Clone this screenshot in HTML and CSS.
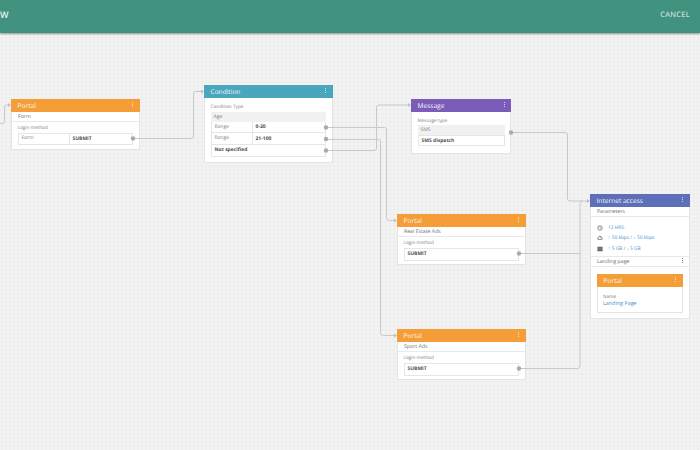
FILE: index.html
```html
<!DOCTYPE html>
<html lang="en">
<head>
<meta charset="utf-8">
<title>Flow editor</title>
<link rel="stylesheet" href="styles.css">
</head>
<body>
<header class="topbar">
  <span class="topbar-title">W</span>
  <span class="topbar-action">CANCEL</span>
</header>
<main class="canvas">
  <section class="node node-portal-form">
    <div class="node-head orange"><span>Portal</span><i class="kebab"></i></div>
    <div class="node-sub">Form</div>
    <div class="node-body">
      <div class="label">Login method</div>
      <div class="rows">
        <div class="row row-form"><span class="cell-key wide">Form</span><b>SUBMIT</b></div>
      </div>
    </div>
  </section>

  <section class="node node-condition">
    <div class="node-head teal"><span>Condition</span><i class="kebab"></i></div>
    <div class="node-body">
      <div class="label">Condition Type</div>
      <div class="grey-row">Age</div>
      <div class="rows">
        <div class="row"><span class="cell-key">Range</span><b>0-20</b></div>
        <div class="row"><span class="cell-key">Range</span><b>21-100</b></div>
        <div class="row"><b class="solo">Not specified</b></div>
      </div>
    </div>
  </section>

  <section class="node node-message">
    <div class="node-head purple"><span>Message</span><i class="kebab"></i></div>
    <div class="node-body">
      <div class="label">Message type</div>
      <div class="grey-row">SMS</div>
      <div class="rows">
        <div class="row row-message"><b class="solo">SMS dispatch</b></div>
      </div>
    </div>
  </section>

  <section class="node node-portal-real">
    <div class="node-head orange"><span>Portal</span><i class="kebab"></i></div>
    <div class="node-sub">Real Estate Ads</div>
    <div class="node-body">
      <div class="label">Login method</div>
      <div class="rows">
        <div class="row row-submit"><b class="solo">SUBMIT</b></div>
      </div>
    </div>
  </section>

  <section class="node node-portal-sport">
    <div class="node-head orange"><span>Portal</span><i class="kebab"></i></div>
    <div class="node-sub">Sport Ads</div>
    <div class="node-body">
      <div class="label">Login method</div>
      <div class="rows">
        <div class="row row-submit"><b class="solo">SUBMIT</b></div>
      </div>
    </div>
  </section>

  <section class="node node-internet">
    <div class="node-head indigo"><span>Internet access</span><i class="kebab"></i></div>
    <div class="node-sub">Parameters</div>
    <div class="params">
      <div class="param">
        <svg class="param-icon" viewBox="0 0 8 8" fill="none" stroke="#666"><circle cx="4" cy="4" r="3"/><path d="M4 2.2V4L5.2 4.8" stroke-width=".7"/></svg>
        <span>12 HRS.</span>
      </div>
      <div class="param">
        <svg class="param-icon" viewBox="0 0 8 8" fill="none" stroke="#666"><path d="M1.2 5.8A3 3 0 1 1 6.8 5.8Z"/><path d="M4 4.5L5.4 2.8" stroke-width=".7"/></svg>
        <span>&#8593; 50 kbps / &#8595; 50 kbps</span>
      </div>
      <div class="param">
        <svg class="param-icon" viewBox="0 0 8 8" fill="#666"><rect x="0.5" y="1" width="7" height="6"/><path d="M0.5 3H7.5M0.5 5H7.5" stroke="#aaa" stroke-width=".5"/></svg>
        <span>&#8593; 5 GB / &#8595; 5 GB</span>
      </div>
    </div>
    <div class="node-sub landing">Landing page<i class="kebab dark"></i></div>
    <div class="nested-wrap">
      <div class="nested">
        <div class="node-head orange"><span>Portal</span><i class="kebab"></i></div>
        <div class="nested-body">
          <div class="nested-label">Name</div>
          <div class="nested-link">Landing Page</div>
        </div>
      </div>
    </div>
  </section>

  <svg class="wires" width="700" height="450" viewBox="0 0 700 450" fill="none">
    <g stroke="#c8c8c8" stroke-width="1">
      <path d="M0 123.5H2.5Q4.5 123.5 4.5 121.5V107Q4.5 105 6.5 105H9"/>
      <path d="M133 138.5H191Q193.5 138.5 193.5 136V94Q193.5 91.5 196 91.5H202"/>
      <path d="M326 127.5H384.5Q386.5 127.5 386.5 129.5V217.5Q386.5 220.5 389.5 220.5H395"/>
      <path d="M326 139.5H378.5Q380.5 139.5 380.5 141.5V332.5Q380.5 335.5 383.5 335.5H395"/>
      <path d="M326 150.5H374Q376.5 150.5 376.5 148V107.5Q376.5 105 379 105H409"/>
      <path d="M511 132.5H565Q567.5 132.5 567.5 135V198.5Q567.5 201 570 201H588"/>
      <path d="M519 253.5H580"/>
      <path d="M519 368.5H577.5Q580 368.5 580 366V203.5Q580 201 582.5 201"/>
    </g>
    <g fill="#c0c0c0">
      <path d="M11 105l-3-2v4z"/>
      <path d="M204 91.5l-3-2v4z"/>
      <path d="M411 105l-3-2v4z"/>
      <path d="M397 220.5l-3-2v4z"/>
      <path d="M397 335.5l-3-2v4z"/>
      <path d="M590 201l-3-2v4z"/>
    </g>
    <g fill="#aaaaaa">
      <circle cx="133" cy="138.5" r="2.2"/>
      <circle cx="326" cy="127.5" r="2.2"/>
      <circle cx="326" cy="139" r="2.2"/>
      <circle cx="326" cy="150.5" r="2.2"/>
      <circle cx="511" cy="132.5" r="2.2"/>
      <circle cx="519" cy="253.5" r="2.2"/>
      <circle cx="519" cy="368.5" r="2.2"/>
    </g>
  </svg>
</main>
</body>
</html>
```
FILE: styles.css
```css
* { box-sizing: border-box; }
html, body { margin: 0; height: 100%; overflow: hidden; }
body {
  width: 700px;
  height: 450px;
  font-family: "Open Sans", "Liberation Sans", sans-serif;
  text-rendering: geometricPrecision;
  color: #666;
  background-color: #f2f2f2;
  background-image: radial-gradient(#ebebeb 0.7px, transparent 1px);
  background-size: 4px 4px;
  position: relative;
}
.topbar {
  height: 33px;
  background: #41937f;
  box-shadow: 0 1px 2px rgba(0, 0, 0, .4);
  display: flex;
  align-items: center;
  justify-content: space-between;
  padding: 0 10px 4px 0;
  color: #e8f2ef;
  position: relative;
  z-index: 2;
}
.topbar-title { font-size: 9px; font-weight: 600; }
.topbar-action { font-size: 7.5px; letter-spacing: .3px; }
.canvas { position: absolute; inset: 0; }
.wires { position: absolute; left: 0; top: 0; pointer-events: none; }
.node {
  position: absolute;
  width: 128.5px;
  background: #fff;
  border: 1px solid #e4e4e4;
  border-top: 0;
}
.node-portal-form { left: 11px; top: 99px; height: 50.5px; }
.node-condition { left: 204px; top: 85px; height: 78px; }
.node-message { left: 411px; top: 99px; width: 100px; height: 54.5px; }
.node-portal-real { left: 397px; top: 214px; height: 51px; }
.node-portal-sport { left: 397px; top: 329px; height: 51px; }
.node-internet { left: 590px; top: 194px; width: 99.5px; height: 125px; }
.node-head {
  height: 13px;
  margin: 0 -1px;
  padding: 0 6.5px 1px;
  display: flex;
  align-items: center;
  justify-content: space-between;
  color: #f7f7f7;
  font-size: 6.6px;
  font-weight: 500;
}
.orange { background: #f59d37; }
.teal { background: #49a7bd; }
.purple { background: #7b5cb9; }
.indigo { background: #5d6fb9; }
.kebab {
  width: 1px;
  height: 6px;
  background-image: linear-gradient(rgba(255,255,255,.7) 50%, transparent 50%);
  background-size: 1px 2px;
  flex: none;
}
.kebab.dark { background-image: linear-gradient(#777 50%, transparent 50%); }
.node-sub {
  height: 10px;
  padding: 0 6px 1px;
  display: flex;
  align-items: center;
  justify-content: space-between;
  font-size: 5.2px;
  color: #707070;
  border-bottom: 1px solid #e9e9e9;
}
.node-body { padding: 3px 5.5px 0; }
.label { font-size: 4.7px; line-height: 7px; color: #808080; margin-bottom: 1px; }
.node-condition .label { margin: 2px 0 1px; line-height: 8px; }
.node-message .label { margin: 2px 0 0; line-height: 8px; }
.grey-row {
  height: 10px;
  padding: 0 3px;
  background: #f1f1f1;
  font-size: 5px;
  line-height: 10px;
  color: #777;
}
.rows { border: 1px solid #e6e6e6; background: #fff; }
.node-condition .rows { border-top: 0; }
.row {
  display: flex;
  align-items: center;
  height: 11.4px;
  font-size: 5px;
  border-bottom: 1px solid #e6e6e6;
}
.row-form { height: 9.7px; }
.row-message { height: 9px; }
.row-submit { height: 10.7px; }
.row:last-child { border-bottom: 0; }
.row b { color: #505050; font-weight: 700; }
.row b.solo { padding-left: 3px; }
.cell-key {
  width: 41px;
  padding-left: 3px;
  margin-right: 3px;
  height: 100%;
  line-height: 10px;
  border-right: 1px solid #e6e6e6;
  color: #808080;
  font-size: 5px;
  flex: none;
}
.cell-key.wide { width: 51px; line-height: 8px; }
.params {
  padding: 5.5px 6px 0;
  height: 40px;
  border-bottom: 1px solid #e9e9e9;
}
.param {
  display: flex;
  align-items: center;
  gap: 5px;
  height: 10.5px;
  font-size: 4.8px;
  color: #3f8fce;
}
.param-icon { width: 6px; height: 6px; flex: none; }
.landing { height: 10px; }
.nested-wrap { padding: 7px 6px 0; }
.nested {
  height: 38.5px;
  border: 1px solid #e4e4e4;
  border-top: 0;
}
.nested-body { padding: 7px 5px; }
.nested-label { font-size: 4.7px; line-height: 6px; color: #777; }
.nested-link { font-size: 5.4px; line-height: 7px; color: #3f8fce; }
```
